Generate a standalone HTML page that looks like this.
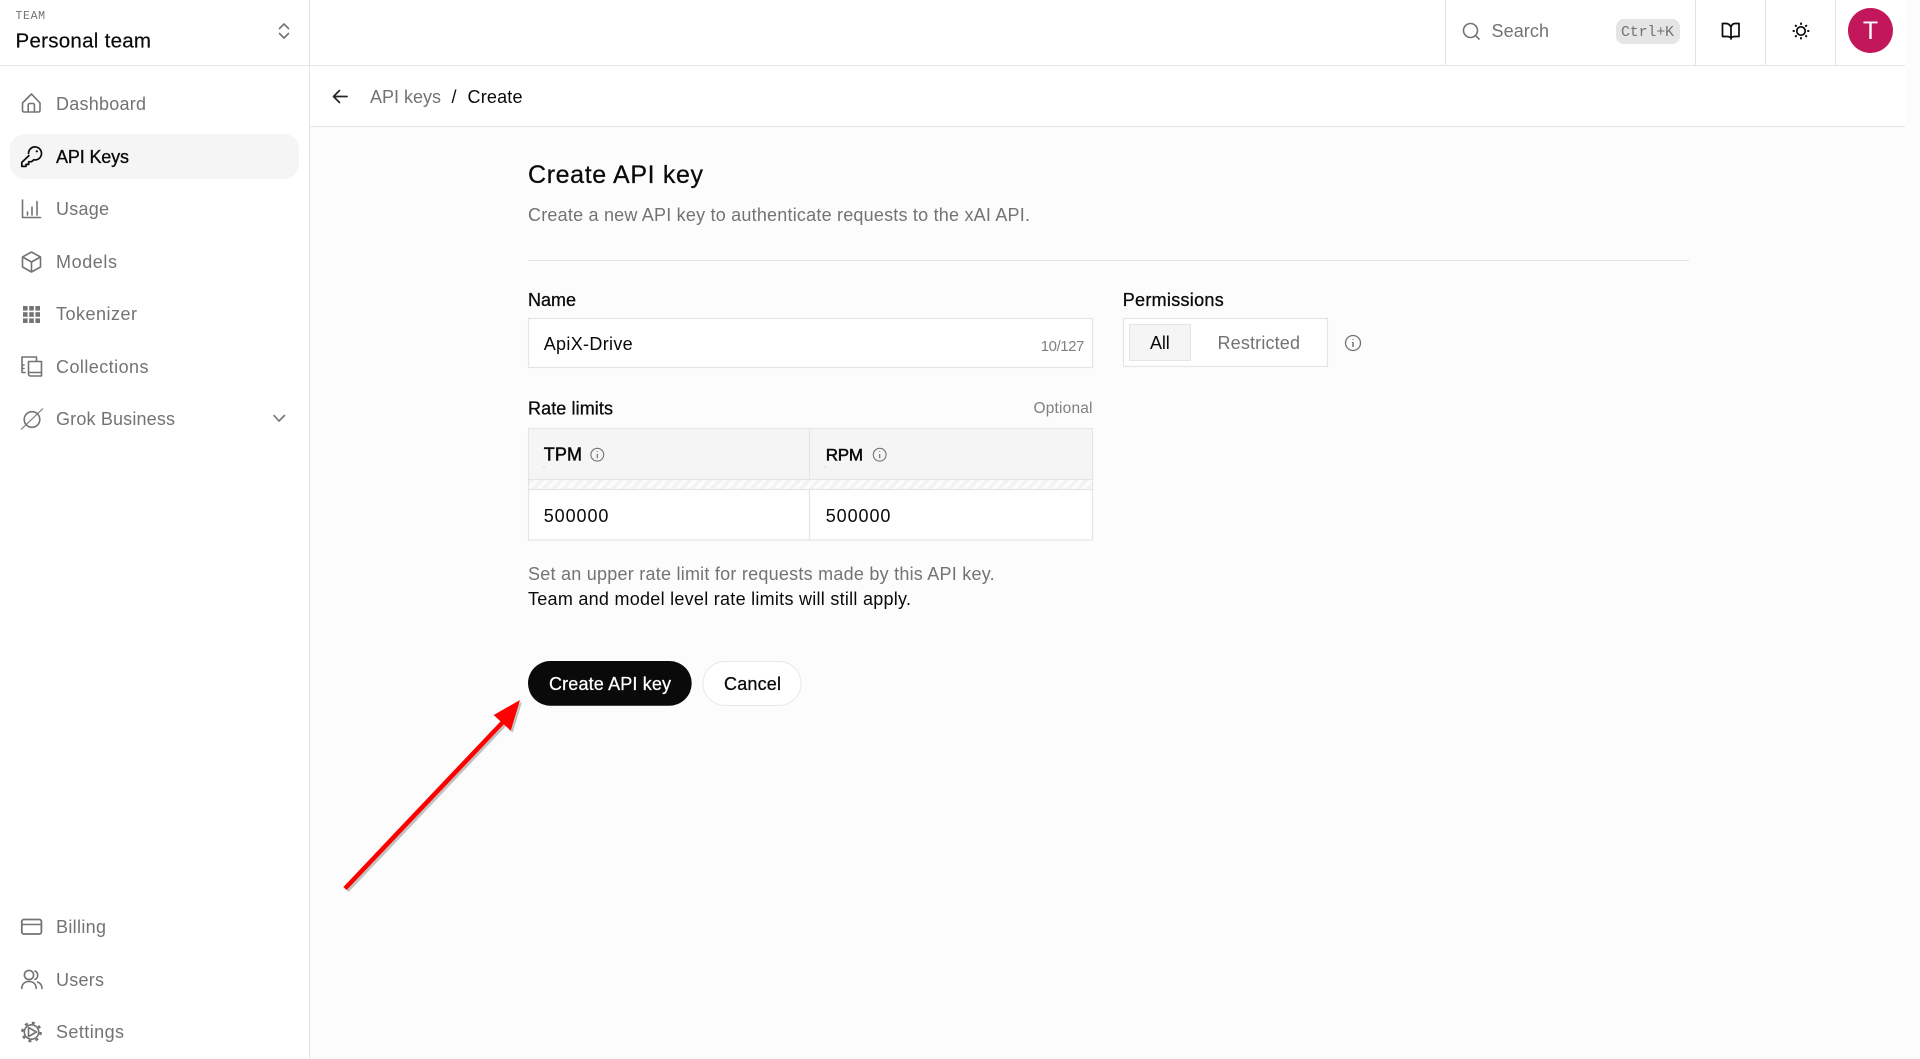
<!DOCTYPE html>
<html lang="en">
<head>
<meta charset="utf-8">
<title>Create API key</title>
<style>
html,body{margin:0;padding:0;background:#fff;width:1920px;height:1059px;overflow:hidden}
svg{display:block}
text{font-family:"Liberation Sans",sans-serif;font-size:18px;fill:#737373}
.k{fill:#0a0a0a}
.m{stroke:#0a0a0a;stroke-width:.3;fill:#0a0a0a}
.mono{font-family:"Liberation Mono",monospace}
.i{fill:none;stroke:#737373;stroke-width:1.6;stroke-linejoin:round;stroke-linecap:round}
.d{fill:none;stroke:#0a0a0a;stroke-width:1.7;stroke-linejoin:round;stroke-linecap:round}
.l{stroke:#e5e5e5;stroke-width:1;fill:none}
</style>
</head>
<body>
<svg width="1920" height="1059" viewBox="0 0 1920 1059" xmlns="http://www.w3.org/2000/svg">
<defs>
<pattern id="hatch" width="7" height="7" patternUnits="userSpaceOnUse" patternTransform="rotate(45)">
<rect width="7" height="7" fill="#fcfcfc"/><rect width="3.5" height="7" fill="#f3f3f3"/>
</pattern>
</defs>

<!-- backgrounds -->
<rect width="1920" height="1059" fill="#fcfcfc"/>
<rect width="309" height="1059" fill="#fff"/>
<rect x="309" width="1596" height="126" fill="#fff"/>
<path class="l" d="M309.500 0V1059M0 65.500H1905M310 126.500H1905M1445.500 0V65M1695.500 0V65M1765.500 0V65M1835.500 0V65"/>

<!-- team switcher -->
<text class="mono" x="15.500" y="19" style="font-size:11.500px" textLength="29.500">TEAM</text>
<text class="m" x="15.500" y="47.500" style="font-size:20.500px;stroke-width:.2" textLength="135.500">Personal team</text>
<path class="i" d="M279.500 28.500L284 24L288.500 28.500M279.500 33.500L284 38L288.500 33.500"/>

<!-- nav -->
<rect x="10" y="134" width="289" height="45" rx="15" fill="#f5f5f5"/>

<path class="i" d="M22.500 103L31.500 94L40 103V110.500a1.500 1.500 0 0 1-1.500 1.500H24a1.500 1.500 0 0 1-1.500-1.500ZM28.200 112V105a1.500 1.500 0 0 1 1.500-1.500h3.200a1.500 1.500 0 0 1 1.500 1.500V112"/>
<text x="56" y="110" textLength="90">Dashboard</text>

<path class="d" d="M28.500 153.500A6.500 6.500 0 1 1 33.800 159.800L31.500 161.700H28.700V164.400H26V166.400H21.800V162.400L28.900 155.600"/>
<circle cx="36.800" cy="151.300" r="1.100" fill="#0a0a0a"/>
<text class="m" x="56" y="163" textLength="73">API Keys</text>

<path class="i" d="M22.500 200V217.500H40.500M27.500 212V215M32 207V215M37 201.500V215"/>
<text x="56" y="215" textLength="53">Usage</text>

<path class="i" d="M31.500 252L40.500 257V267L31.500 272L22.500 267V257ZM22.500 257L31.500 262L40.500 257M31.500 262V272"/>
<text x="56" y="268" textLength="61">Models</text>

<g fill="#737373">
<rect x="23" y="306" width="4.600" height="4.600"/><rect x="29.200" y="306" width="4.600" height="4.600"/><rect x="35.400" y="306" width="4.600" height="4.600"/>
<rect x="23" y="312.200" width="4.600" height="4.600"/><rect x="29.200" y="312.200" width="4.600" height="4.600"/><rect x="35.400" y="312.200" width="4.600" height="4.600"/>
<rect x="23" y="318.400" width="4.600" height="4.600"/><rect x="29.200" y="318.400" width="4.600" height="4.600"/><rect x="35.400" y="318.400" width="4.600" height="4.600"/>
</g>
<text x="56" y="320" textLength="81">Tokenizer</text>

<path class="i" d="M36.500 361V357H22V372.500H25M22 365H24M22 368.500H24"/>
<path class="i" d="M28.500 361.500H41.500V376H30.500a2 2 0 0 1-2-2ZM28.500 372.500H41.500"/>
<text x="56" y="373" textLength="92.500">Collections</text>

<circle cx="32" cy="419.500" r="7.800" class="i"/>
<path d="M21 429.500L43 408.500" stroke="#737373" stroke-width="1.100" fill="none"/>
<text x="56" y="425" textLength="119">Grok Business</text>
<path class="i" d="M274 415.500L279 421L284.500 415.500"/>

<rect x="21.800" y="919.500" width="19.600" height="14.500" rx="2" class="i" style="stroke-width:1.800"/>
<path d="M22 924.500H41" stroke="#737373" stroke-width="1.600"/>
<text x="56" y="933" textLength="50">Billing</text>

<circle cx="29" cy="975" r="4.600" class="i"/>
<path class="i" d="M21.800 988.500c0-4.500 3-7 7.200-7s7.200 2.500 7.200 7M35 971a4.600 4.600 0 0 1 0 8.400M37.500 982c2.700 1 4.500 3.300 4.500 6.500"/>
<text x="56" y="986" textLength="48">Users</text>

<circle cx="31.500" cy="1032" r="7.200" class="i"/>
<circle cx="31.500" cy="1032" r="9.200" fill="none" stroke="#737373" stroke-width="2.400" stroke-dasharray="3 4.230"/>
<path class="i" d="M28.500 1027.500L36.500 1032L28.500 1036.500Z"/>
<text x="56" y="1038" textLength="68">Settings</text>

<!-- top bar -->
<circle cx="1470.500" cy="30.500" r="7" fill="none" stroke="#737373" stroke-width="1.600"/>
<path d="M1475.500 35.500L1479 39" stroke="#737373" stroke-width="1.600" stroke-linecap="round"/>
<text x="1491.500" y="37" textLength="57.500">Search</text>
<rect x="1616" y="19" width="64" height="25" rx="8" fill="#e5e5e5"/>
<text class="mono" x="1621" y="36" style="font-size:15px" textLength="53">Ctrl+K</text>

<path class="d" d="M1731 27V39M1731 27c-1-2-2.500-3.500-5-3.500h-3.500V36.500H1727c2 0 3.200.5 4 1.500c.8-1 2-1.500 4-1.500h4V23.500h-3.500c-2.500 0-4 1.500-4.500 3.500Z"/>
<circle cx="1801" cy="31" r="4.200" class="d"/>
<path class="d" style="stroke-width:2" d="M1801 23.500V24M1801 38V38.500M1793.500 31H1794M1808 31H1808.500M1795.700 25.700L1796 26M1806 36L1806.300 36.300M1795.700 36.300L1796 36M1806 26L1806.300 25.700"/>
<circle cx="1870.500" cy="30.500" r="22.500" fill="#c2185b"/>
<text x="1870.500" y="39" text-anchor="middle" style="font-size:25px;fill:#fff">T</text>

<!-- breadcrumb -->
<path d="M347 96.500H334M339.500 90.500L333.500 96.500L339.500 102.500" fill="none" stroke="#262626" stroke-width="1.700" stroke-linecap="round" stroke-linejoin="round"/>
<text x="370" y="103" textLength="71">API keys</text>
<text class="k" x="451.500" y="103">/</text>
<text class="k" x="467.500" y="103" textLength="55">Create</text>

<!-- page heading -->
<text class="m" x="528" y="183" style="font-size:25px;stroke-width:.25" textLength="175">Create API key</text>
<text x="528" y="221" textLength="502">Create a new API key to authenticate requests to the xAI API.</text>
<path class="l" d="M528 260.500H1689"/>

<!-- name -->
<text class="m" x="528" y="306" textLength="48">Name</text>
<rect x="528.500" y="318.500" width="564" height="49" fill="#fff" stroke="#e5e5e5" stroke-width="1.200"/>
<text class="k" x="543.700" y="350" textLength="89">ApiX-Drive</text>
<text x="1040.800" y="351" style="font-size:15px;fill:#808080" textLength="43.600">10/127</text>

<!-- permissions -->
<text class="m" x="1122.700" y="306" textLength="101">Permissions</text>
<rect x="1123.500" y="318.500" width="204" height="48" fill="#fff" stroke="#e5e5e5" stroke-width="1.200"/>
<rect x="1129.500" y="324.500" width="61" height="36" fill="#f5f5f5" stroke="#e5e5e5"/>
<text class="k" x="1150" y="349" textLength="19.700">All</text>
<text x="1217.500" y="349" textLength="82.500">Restricted</text>
<circle cx="1353" cy="343" r="7.500" fill="none" stroke="#737373" stroke-width="1.300"/>
<path d="M1353 342V347M1353 339V339.800" stroke="#737373" stroke-width="1.500"/>

<!-- rate limits -->
<text class="m" x="528" y="414.700" textLength="85">Rate limits</text>
<text x="1033.500" y="413" style="font-size:15.500px;fill:#808080" textLength="59">Optional</text>
<rect x="528.500" y="428.500" width="564" height="111.500" fill="#fff"/>
<rect x="528.500" y="428.500" width="564" height="51" fill="#f5f5f5"/>
<rect x="528.500" y="479.500" width="564" height="10" fill="url(#hatch)"/>
<path class="l" style="stroke-width:1.200" d="M528.500 428.500H1092.500V540H528.500ZM528.500 479.500H1092.500M528.500 489.500H1092.500M809.500 428.500V479.500M809.500 489.500V540"/>
<text class="m" x="543.700" y="460.700" style="stroke-width:.5" textLength="38.300">TPM</text>
<circle cx="597.300" cy="454.700" r="6.400" fill="none" stroke="#737373" stroke-width="1.100"/>
<path d="M597.300 454V458.200M597.300 451.200V452" stroke="#737373" stroke-width="1.200"/>
<text class="m" x="825.700" y="460.700" style="stroke-width:.5;font-size:17px" textLength="37.300">RPM</text>
<circle cx="879.700" cy="454.700" r="6.400" fill="none" stroke="#737373" stroke-width="1.100"/>
<path d="M879.700 454V458.200M879.700 451.200V452" stroke="#737373" stroke-width="1.200"/>
<rect x="543" y="466" width="2" height="2" fill="#e5e5e5"/>
<rect x="824.500" y="466" width="2" height="2" fill="#e5e5e5"/>
<text class="k" x="543.700" y="522" textLength="64.700">500000</text>
<text class="k" x="825.700" y="522" textLength="64.700">500000</text>

<!-- helper -->
<text x="528" y="580" textLength="466.700">Set an upper rate limit for requests made by this API key.</text>
<text class="k" x="528" y="605" textLength="383">Team and model level rate limits will still apply.</text>

<!-- buttons -->
<rect x="528" y="661" width="163.700" height="44.700" rx="22.300" fill="#0a0a0a"/>
<text x="549" y="690" style="fill:#fff;stroke:#fff;stroke-width:.25" textLength="122">Create API key</text>
<rect x="703" y="661.500" width="98" height="44" rx="22" fill="#fff" stroke="#e9e9e9"/>
<text class="m" x="724" y="690" textLength="57">Cancel</text>

<!-- annotation arrow -->
<g transform="translate(2 2)" opacity=".35" fill="#555" stroke="#555">
<path d="M345 888.500L503 722" stroke-width="4.500" fill="none"/>
<path d="M520 700L493.700 715L510.700 730.700Z" stroke="none"/>
</g>
<path d="M345 888.500L503 722" stroke="#ff0000" stroke-width="4.500" fill="none"/>
<path d="M520 700L493.700 715L510.700 730.700Z" fill="#ff0000"/>
</svg>
</body>
</html>
